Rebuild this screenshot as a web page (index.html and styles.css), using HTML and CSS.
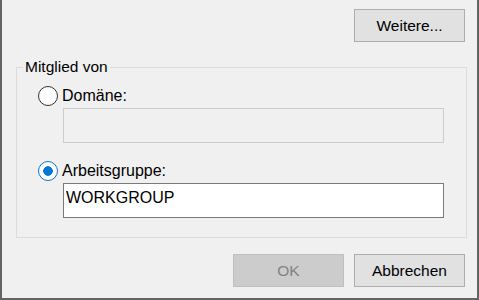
FILE: index.html
```html
<!DOCTYPE html>
<html lang="de">
<head>
<meta charset="utf-8">
<link rel="stylesheet" href="styles.css">
</head>
<body>
<div class="dialog">
  <div class="top">
    <button class="btn" type="button">Weitere...</button>
  </div>
  <fieldset class="group">
    <legend class="legend">Mitglied von</legend>
    <div class="group-body">
      <label class="option"><input class="radio" type="radio" name="member"><span>Domäne:</span></label>
      <input class="field" type="text" disabled>
      <label class="option option-second"><input class="radio" type="radio" name="member" checked><span>Arbeitsgruppe:</span></label>
      <input class="field field-active" type="text" value="WORKGROUP">
    </div>
  </fieldset>
  <div class="actions">
    <button class="btn" type="button" disabled>OK</button>
    <button class="btn" type="button">Abbrechen</button>
  </div>
</div>
</body>
</html>
```
FILE: styles.css
```css
html, body {
  margin: 0;
  padding: 0;
}

body {
  background: #f0f0f0;
  font-family: "Liberation Sans", Arial, sans-serif;
  font-size: 15.5px;
  color: #000;
}

.dialog {
  width: 479px;
  height: 300px;
  box-sizing: border-box;
  border: 2px solid #646464;
  border-top: 0;
  background: #f0f0f0;
}

.top {
  display: flex;
  justify-content: flex-end;
  padding: 9px 12px 0 0;
}

.btn {
  width: 111px;
  height: 33px;
  box-sizing: border-box;
  margin: 0;
  padding: 0;
  border: 1px solid #adadad;
  background: #e1e1e1;
  font: inherit;
  color: #000;
}

.btn:disabled {
  background: #cccccc;
  border-color: #bfbfbf;
  color: #838383;
}

.group {
  margin: 16px 10px 0 14px;
  padding: 0;
  border: 1px solid #dcdcdc;
  min-width: 0;
}

.legend {
  margin-left: 6px;
  padding: 0 2px;
  line-height: 18px;
}

.group-body {
  display: flex;
  flex-direction: column;
  align-items: flex-start;
  padding: 10px 0 19px 21px;
}

.option {
  display: flex;
  align-items: center;
  gap: 4px;
  height: 20px;
  line-height: 20px;
  font-size: 16px;
}

.option-second {
  margin-top: 18px;
}

.radio {
  appearance: none;
  -webkit-appearance: none;
  width: 20px;
  height: 20px;
  margin: 0;
  box-sizing: border-box;
  border: 1px solid #333;
  border-radius: 50%;
  background: #fff;
}

.radio:checked {
  border: 1.5px solid #0078d7;
  background: radial-gradient(circle, #0078d7 0 4.5px, #fff 5px);
}

.field {
  margin: 2px 0 0 25px;
  width: 381px;
  height: 35px;
  box-sizing: border-box;
  padding: 0 2px 6px 2px;
  border: 1px solid #cccccc;
  background: #f0f0f0;
  font-family: "Liberation Sans", Arial, sans-serif;
  font-size: 16px;
  color: #000;
  outline: none;
}

.field-active {
  border-color: #7a7a7a;
  background: #fff;
}

.actions {
  display: flex;
  justify-content: flex-end;
  gap: 10px;
  margin-top: 16px;
  padding-right: 12px;
}
```
